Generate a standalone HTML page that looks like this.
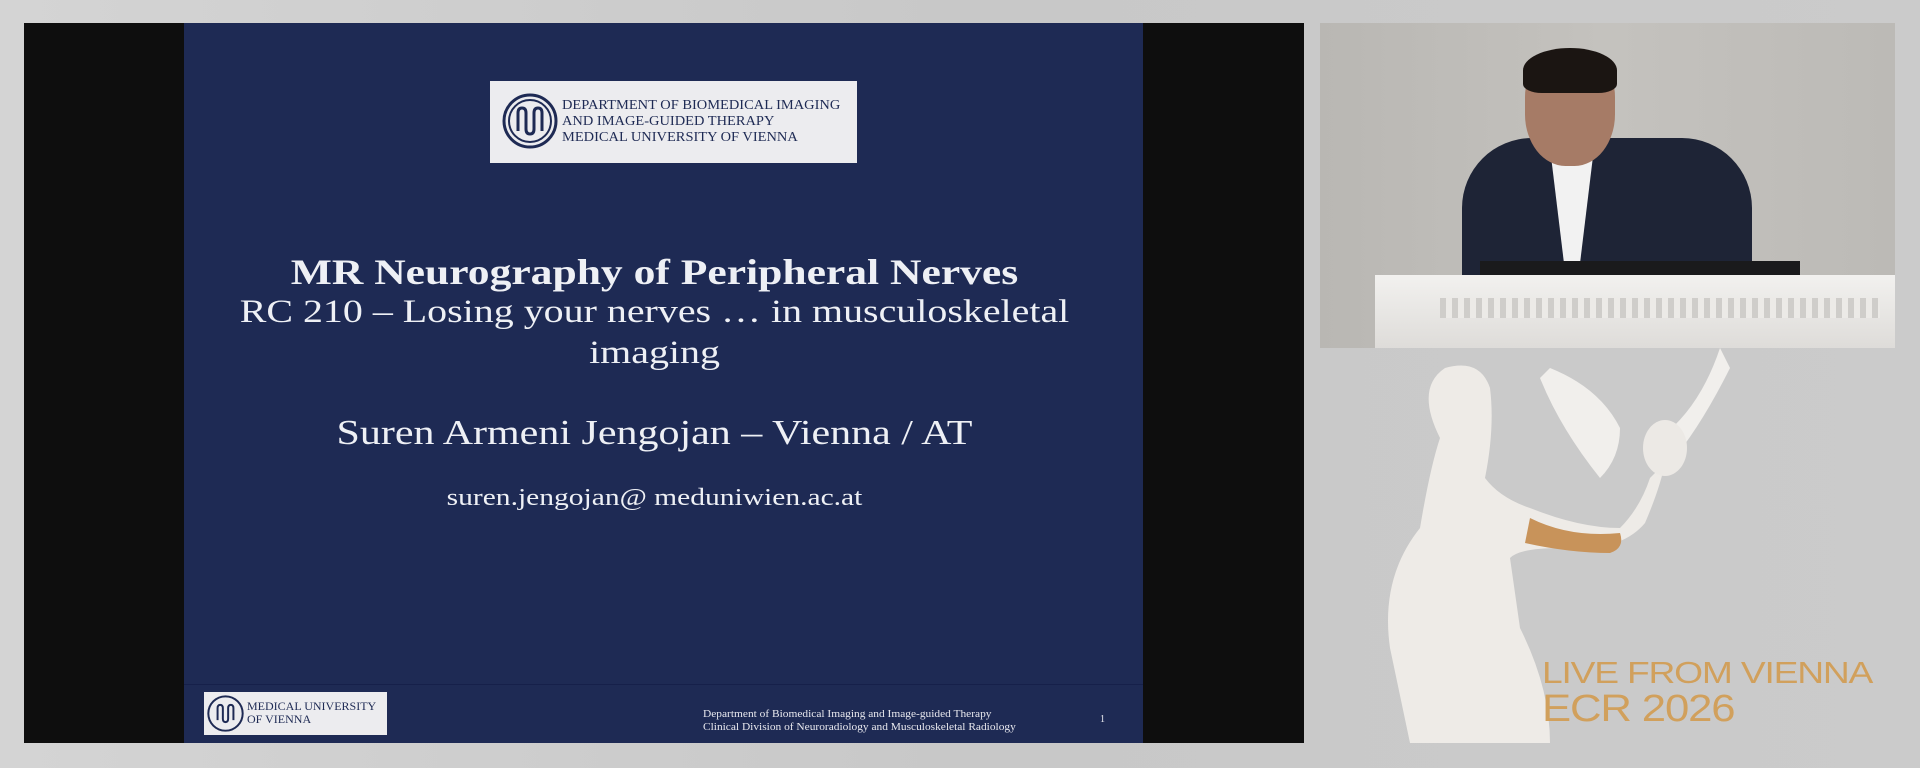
<!DOCTYPE html>
<html><head><meta charset="utf-8"><style>
*{margin:0;padding:0;box-sizing:border-box}
body{width:1920px;height:768px;overflow:hidden;background:linear-gradient(90deg,#d4d4d4,#c8c8c8 50%,#cbcbcb);position:relative;font-family:"Liberation Serif",serif}
.a{position:absolute}
.c{left:175px;width:959px;text-align:center;color:#eef0f5;transform:scaleX(1.21);transform-origin:center}
.l{transform-origin:left center}
</style></head><body>
<div class="a" style="left:24px;top:23px;width:1280px;height:720px;background:#0e0e0e"></div>
<div class="a" style="left:184px;top:23px;width:959px;height:720px;background:#1e2a54"></div>
<div class="a" style="left:184px;top:684px;width:959px;height:1px;background:#16204a"></div>
<div class="a" style="left:490px;top:81px;width:367px;height:82px;background:#ececef"></div>
<svg class="a" style="left:502px;top:93px" width="56" height="56" viewBox="0 0 56 56"><circle cx="28" cy="28" r="26" fill="none" stroke="#1e2a54" stroke-width="3"/><circle cx="28" cy="28" r="21" fill="none" stroke="#1e2a54" stroke-width="2"/><path d="M16 38V20q0-5 4-5t4 5v16q0 5 4 5t4-5V20q0-5 4-5t4 5v18" fill="none" stroke="#1e2a54" stroke-width="3"/></svg>
<div class="a l" style="left:562px;top:97px;font-size:13.5px;line-height:16px;color:#1e2a54;transform:scaleX(1.07)">DEPARTMENT OF BIOMEDICAL IMAGING<br>AND IMAGE-GUIDED THERAPY<br>MEDICAL UNIVERSITY OF VIENNA</div>
<div class="a c" style="top:251px;font-size:36px;font-weight:bold">MR Neurography of Peripheral Nerves</div>
<div class="a c" style="top:292px;font-size:33px;line-height:41px">RC 210 – Losing your nerves … in musculoskeletal<br>imaging</div>
<div class="a c" style="top:413px;font-size:35px;transform:scaleX(1.2)">Suren Armeni Jengojan – Vienna / AT</div>
<div class="a c" style="top:485px;font-size:24px;transform:scaleX(1.23)">suren.jengojan@ meduniwien.ac.at</div>
<div class="a" style="left:204px;top:692px;width:183px;height:43px;background:#ececef"></div>
<svg class="a" style="left:207px;top:695px" width="37" height="37" viewBox="0 0 56 56"><circle cx="28" cy="28" r="26" fill="none" stroke="#1e2a54" stroke-width="3"/><path d="M16 38V20q0-5 4-5t4 5v16q0 5 4 5t4-5V20q0-5 4-5t4 5v18" fill="none" stroke="#1e2a54" stroke-width="3"/></svg>
<div class="a" style="left:247px;top:700px;font-size:12px;line-height:13px;color:#1e2a54">MEDICAL UNIVERSITY<br>OF VIENNA</div>
<div class="a l" style="left:703px;top:708px;font-size:10px;line-height:13px;color:#e8e8ee;transform:scaleX(1.14)">Department of Biomedical Imaging and Image-guided Therapy<br>Clinical Division of Neuroradiology and Musculoskeletal Radiology</div>
<div class="a" style="left:1100px;top:714px;font-size:10px;color:#e8e8ee">1</div>
<!-- camera -->
<div class="a" style="left:1320px;top:23px;width:575px;height:325px;background:linear-gradient(90deg,#b9b7b3,#c4c2be 50%,#bcbab6);overflow:hidden">
<div class="a" style="left:142px;top:115px;width:290px;height:170px;background:#1e2436;border-radius:70px 70px 0 0"></div>
<div class="a" style="left:230px;top:125px;width:44px;height:145px;background:#f2f2f2;clip-path:polygon(0 0,100% 0,60% 100%,40% 100%)"></div>
<div class="a" style="left:205px;top:28px;width:90px;height:115px;background:#a67b66;border-radius:40% 40% 45% 45%"></div>
<div class="a" style="left:203px;top:25px;width:94px;height:45px;background:#1b1512;border-radius:50% 50% 20% 20%"></div>
<div class="a" style="left:160px;top:238px;width:320px;height:16px;background:#1a1a1c"></div>
<div class="a" style="left:55px;top:252px;width:520px;height:73px;background:linear-gradient(#f2f1ef,#dedcd9)"></div>
<div class="a" style="left:120px;top:275px;width:440px;height:20px;background:repeating-linear-gradient(90deg,#cfcdca 0 6px,#eceae7 6px 12px)"></div>
</div>
<!-- statue area -->
<svg class="a" style="left:1320px;top:348px" width="575" height="395" viewBox="0 0 575 395">
<path d="M90 395 L70 300 Q60 230 100 180 Q110 120 120 90 Q95 40 125 20 Q160 10 170 40 Q175 80 165 130 Q180 150 210 160 Q260 180 300 180 Q320 160 330 130 L345 115 Q340 140 325 175 Q300 205 240 200 Q200 200 190 210 L200 280 Q230 340 230 395Z" fill="#eeebe7"/>
<path d="M210 170 Q250 190 300 185 Q305 200 290 205 Q250 205 205 195Z" fill="#c8935a"/>
<path d="M230 20 Q280 40 300 80 Q300 110 280 130 Q240 80 220 30Z" fill="#f1efec"/>
<path d="M400 0 Q380 60 340 90 Q330 110 350 115 Q380 80 410 20Z" fill="#f1efec"/>
<ellipse cx="345" cy="100" rx="22" ry="28" fill="#ece9e5"/>
</svg>
<div class="a l" style="left:1542px;top:655px;font-family:'Liberation Sans',sans-serif;font-size:31px;color:#d1a05c;letter-spacing:-1px;transform:scaleX(1.2)">LIVE FROM VIENNA</div>
<div class="a l" style="left:1542px;top:688px;font-family:'Liberation Sans',sans-serif;font-size:38px;color:#d1a05c;letter-spacing:-1px;transform:scaleX(1.15)">ECR 2026</div>
</body></html>
